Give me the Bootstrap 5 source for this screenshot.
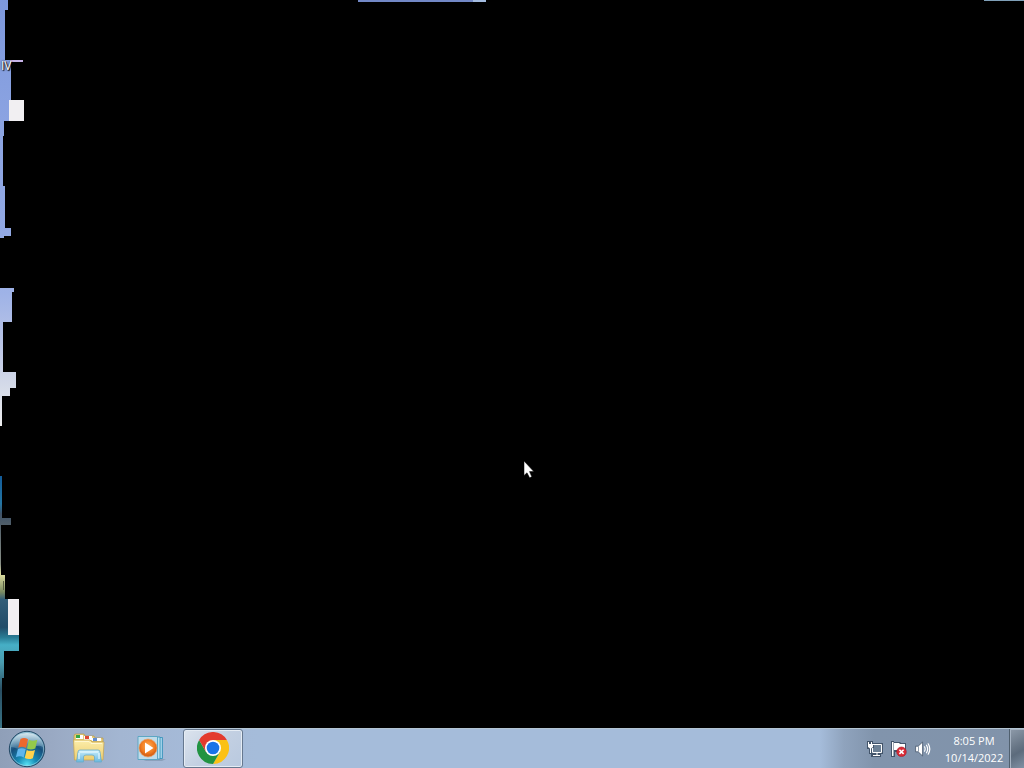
<!DOCTYPE html>
<html lang="en">
<head>
<meta charset="utf-8">
<meta name="viewport" content="width=device-width, initial-scale=1">
<title>Desktop</title>
<link href="https://cdn.jsdelivr.net/npm/bootstrap@5.3.0/dist/css/bootstrap.min.css" rel="stylesheet">
<style>
  body { background: #000; font-family: "Open Sans", "Noto Sans", sans-serif; }
  button { border: 0; background: none; padding: 0; }
  svg { display: block; }
  .wallpaper { left: 0; top: 0; }
  .strip-top { left: 35%; top: 0; width: 128px; height: 2px; background: linear-gradient(90deg, #7288c6 0 115px, #a4bce0 115px); }
  .strip-end { right: 0; top: 0; width: 40px; height: 1px; background: #7f9fb8; }
  .shortcut { left: 1px; top: 58px; font-size: 12px; line-height: 16px; color: #fff; text-shadow: 1px 1px 1px #000, 0 0 2px #000; }
  .pointer { left: 523px; top: 460px; }
  .taskbar {
    height: 40px;
    border-top: 1px solid #b4c5d3;
    background: linear-gradient(90deg, #8f9fb8 0, #9aaac4 56px, #a3b6d2 120px, #a5bad8 190px, #a5bcda 260px, #a5bcda calc(100% - 204px), #8fa3bd calc(100% - 180px), #8194ac calc(100% - 150px), #8193aa 100%);
  }
  .start { width: 51px; padding-left: 8px; }
  .task { width: 60px; margin-left: 2px; padding-bottom: 1px; border: 1px solid transparent; border-radius: 3px; }
  .task.running { border-color: #66788f; background: linear-gradient(135deg, #dce4ee, #c3d0e2 50%, #b9c9df); box-shadow: inset 0 0 0 1px #e5ecf4; }
  .tray { gap: 8px; }
  .clock { width: 70px; font-size: 11px; line-height: 17px; color: #fff; text-align: center; }
  .peek { width: 15px; border-left: 1px solid #50606f; background: linear-gradient(150deg, #8e9baa, #687686 45%, #5c6b7c 60%, #8091a4); box-shadow: inset 1px 1px 0 #a6b3c2; }
</style>
</head>
<body>
<div class="d-flex flex-column vh-100 overflow-hidden">
  <main class="flex-grow-1 position-relative overflow-hidden">
    <svg class="wallpaper position-absolute" width="26" height="728" viewBox="0 0 26 728" shape-rendering="crispEdges" aria-hidden="true">
      <defs>
        <linearGradient id="sky" x1="0" y1="0" x2="0" y2="426" gradientUnits="userSpaceOnUse">
          <stop offset="0" stop-color="#7d98dc"/><stop offset=".3" stop-color="#8ca4e2"/><stop offset=".55" stop-color="#92a9e4"/><stop offset=".69" stop-color="#9fb3e7"/><stop offset=".8" stop-color="#b8c3e6"/><stop offset=".9" stop-color="#d3d9e8"/><stop offset="1" stop-color="#ececee"/>
        </linearGradient>
        <linearGradient id="sea" x1="0" y1="476" x2="0" y2="728" gradientUnits="userSpaceOnUse">
          <stop offset="0" stop-color="#125c9a"/><stop offset=".11" stop-color="#2475a3"/><stop offset=".15" stop-color="#3f5267"/><stop offset=".2" stop-color="#53606a"/><stop offset=".35" stop-color="#899087"/><stop offset=".39" stop-color="#dddda0"/><stop offset=".46" stop-color="#7b8b62"/><stop offset=".49" stop-color="#315d78"/><stop offset=".6" stop-color="#214c69"/><stop offset=".64" stop-color="#287b94"/><stop offset=".67" stop-color="#46afc6"/><stop offset=".74" stop-color="#4a9caf"/><stop offset=".85" stop-color="#294e62"/><stop offset="1" stop-color="#397486"/>
        </linearGradient>
      </defs>
      <path fill="url(#sky)" d="M0 0H8V10H5V60H23V62H11V100H9V121H4V136H3V186H5V228H11V236H4V238H0ZM0 288H14V292H12V322H3V372H16V388H10V396H2V426H0Z"/>
      <path fill="#c7b4e8" d="M10 60H23V62H10Z"/>
      <path fill="#f1eff2" d="M9 100H24V121H9Z"/>
      <path fill="url(#sea)" d="M0 476H2V518H11V525H1V575H5V599H8V635H19V651H4V678H2V728H0Z"/>
      <path fill="#f1eff2" d="M8 599H19V635H8Z"/>
      <path fill="#596043" d="M3 581H4V590H3Z"/>
    </svg>
    <div class="strip-top position-absolute"></div>
    <div class="strip-end position-absolute"></div>
    <span class="shortcut position-absolute">IV</span>
    <svg class="pointer position-absolute" width="13" height="20" viewBox="0 0 13 20" aria-hidden="true">
      <path fill="#fff" stroke="#000" stroke-width=".5" d="M1 1V15.5L4 12.8L6.6 17.8L8.8 16.8L6.5 11.6H10.8Z"/>
    </svg>
  </main>

  <nav class="taskbar d-flex align-items-stretch flex-shrink-0" aria-label="Taskbar">
    <button class="start d-flex align-items-center" type="button" aria-label="Start">
      <svg width="38" height="38" viewBox="0 0 38 38">
        <defs>
          <radialGradient id="orb" cx=".5" cy=".95" r=".9"><stop offset="0" stop-color="#59e2f4"/><stop offset=".3" stop-color="#168bb5"/><stop offset=".65" stop-color="#164f7c"/><stop offset="1" stop-color="#6f9fbb"/></radialGradient>
          <linearGradient id="gloss" x1="0" y1="0" x2="0" y2="1"><stop offset="0" stop-color="#e4f1f6" stop-opacity=".9"/><stop offset="1" stop-color="#8dbad0" stop-opacity=".25"/></linearGradient>
        </defs>
        <circle cx="19" cy="19" r="17.7" fill="url(#orb)" stroke="#244a66"/>
        <circle cx="19" cy="19" r="16.6" fill="none" stroke="#a8d5e4" stroke-opacity=".6"/>
        <path fill="url(#gloss)" d="M3 17C4 7 11 3 19 3S34 7 35 17C28 13 23 20 17 20S7 17 3 17Z"/>
        <path fill="#ec682e" d="M12.5 9C15 7.5 17.5 7.7 20 9.2L18 18C15.5 16.5 13 16.5 10.2 17.7Z"/>
        <path fill="#94c94b" d="M21 9.7C23.5 11 26 11 29.3 9.7L27.3 18.5C24 19.8 21.5 19.7 19 18.5Z"/>
        <path fill="#5eb6ed" d="M9.9 19C12.8 17.8 15.3 17.9 17.7 19.3L15.7 27.5C13.3 26 10.8 26 7.9 27.2Z"/>
        <path fill="#ffd34c" d="M18.7 19.9C21.2 21.1 23.8 21.1 27 19.9L24.9 28.2C21.8 29.5 19.2 29.3 16.7 28.1Z"/>
      </svg>
    </button>
    <button class="task d-flex align-items-center justify-content-center ms-2" type="button" aria-label="Windows Explorer">
      <svg width="34" height="32" viewBox="0 0 34 32">
        <defs><linearGradient id="folder" x1="0" y1="0" x2="0" y2="1"><stop offset="0" stop-color="#fbedaa"/><stop offset="1" stop-color="#eece70"/></linearGradient>
        <linearGradient id="stand" x1="0" y1="0" x2="0" y2="1"><stop offset="0" stop-color="#c9effc"/><stop offset="1" stop-color="#69b7df"/></linearGradient></defs>
        <path fill="#e8cf7c" stroke="#b99a46" stroke-width=".7" d="M2 4Q2 2 4 2H12L13 4H22L23 6H31V10H2Z"/>
        <path fill="#fff" d="M4 3H11V7H4ZM12 4H20V8H12ZM20 6H29V9H20Z"/>
        <path fill="#34a744" d="M4 3H8V6H4Z"/><path fill="#df4a35" d="M13 4H17V7H13Z"/><path fill="#638ed1" d="M21 6H25V9H21Z"/>
        <path fill="url(#folder)" stroke="#c5a34e" stroke-width=".7" d="M1.5 8H18L20 10H32L31 28H2.5Z"/>
        <path fill="none" stroke="#fff7cf" d="M3 9.5H17L19 11.5H30"/>
        <path fill="url(#stand)" stroke="#6aabc8" stroke-width=".8" d="M6 20Q6 18 8 18H26Q28 18 28 20L29.5 30H22.5V25Q22.5 23 20 23H14Q11.5 23 11.5 25V30H4.5Z"/>
        <path fill="none" stroke="#effcff" d="M7.5 20H26.5M7 27V21M27 27V21"/>
      </svg>
    </button>
    <button class="task d-flex align-items-center justify-content-center" type="button" aria-label="Windows Media Player">
      <svg width="30" height="28" viewBox="0 0 30 28">
        <defs><radialGradient id="disc" cx=".5" cy=".4"><stop offset="0" stop-color="#ffad56"/><stop offset=".75" stop-color="#f07b20"/><stop offset="1" stop-color="#d96517"/></radialGradient></defs>
        <path fill="#6d829b" opacity=".45" d="M5 25H30L26 27H10Z"/>
        <path fill="#9fd0e8" stroke="#328fb8" stroke-width=".8" d="M20 3.5H26.5V24.5H20Z"/>
        <path fill="#b9e2f2" stroke="#328fb8" stroke-width=".8" d="M17 3H24V25H17Z"/>
        <path fill="#bfdcea" stroke="#55a3c1" stroke-width=".9" d="M2 2.5H21.5V25.5H2Z"/>
        <circle cx="12" cy="14" r="9" fill="url(#disc)" stroke="#e5a06a" stroke-width=".7"/>
        <path fill="#fff" d="M9 8.5L17.5 14L9 19.5Z"/>
      </svg>
    </button>
    <button class="task running d-flex align-items-center justify-content-center" type="button" aria-label="Google Chrome">
      <svg width="32" height="32" viewBox="0 0 48 48">
        <path fill="#fbc116" d="M24 24L24 12H44.8A24 24 0 0 1 24 48L34.4 30Z"/>
        <path fill="#229342" d="M24 24L34.4 30L24 48A24 24 0 0 1 3.2 12L13.6 30Z"/>
        <path fill="#e33b2e" d="M3.2 12L13.6 30L24 24V12H44.8A24 24 0 0 0 3.2 12Z"/>
        <circle cx="24" cy="24" r="12" fill="#fff"/><circle cx="24" cy="24" r="9.5" fill="#1a73e8"/>
      </svg>
    </button>

    <div class="tray d-flex align-items-center ms-auto">
      <button type="button" aria-label="Network">
        <svg width="16" height="16" viewBox="0 0 16 16">
          <path fill="#42546a" d="M0 0H6V2H16V13H14V16H4V13H2V8H0Z"/>
          <path fill="none" stroke="#fff" stroke-width="1" d="M6 3.5H14.5V11.5H5.5V7M10 12V14M6 14.5H13"/>
          <path fill="#6d8196" d="M7 4H14V11H6V7H7Z"/>
          <path fill="#fff" d="M1 1H2V3H4V1H5V3H6V6L4 7.5V12H3V7.5L1 6Z"/>
        </svg>
      </button>
      <button type="button" aria-label="Action Center">
        <svg width="16" height="16" viewBox="0 0 16 16">
          <path fill="#42546a" d="M0 0H3V1H9L10 2H15V11H4V16H0Z"/>
          <path fill="#fff" d="M1 1H2.5V15H1ZM3 2H8L9 3H14V10H8L7 9H3Z"/>
          <circle cx="10.5" cy="10.8" r="4.8" fill="#d92b36" stroke="#a71927" stroke-width=".6"/>
          <path stroke="#fff" stroke-width="1.6" d="M8.4 8.7L12.6 12.9M12.6 8.7L8.4 12.9"/>
        </svg>
      </button>
      <button type="button" aria-label="Volume">
        <svg width="16" height="16" viewBox="0 0 16 16">
          <path fill="#fff" stroke="#42546a" stroke-width=".8" d="M.6 5.2H3.2L7.6 1V15L3.2 10.8H.6Z"/>
          <path stroke="#708296" stroke-width=".8" d="M3.5 5.5V10.5"/>
          <path fill="none" stroke="#fff" stroke-width="1.2" stroke-linecap="round" d="M9.5 5.8Q10.8 8 9.5 10.2M11.5 4.2Q13.8 8 11.5 11.8M13.2 2.8Q16.4 8 13.2 13.2"/>
        </svg>
      </button>
      <button class="clock" type="button"><span class="d-block">8:05 PM</span><span class="d-block">10/14/2022</span></button>
    </div>
    <button class="peek" type="button" aria-label="Show desktop"></button>
  </nav>
</div>
<script src="https://cdn.jsdelivr.net/npm/bootstrap@5.3.0/dist/js/bootstrap.bundle.min.js"></script>
</body>
</html>
